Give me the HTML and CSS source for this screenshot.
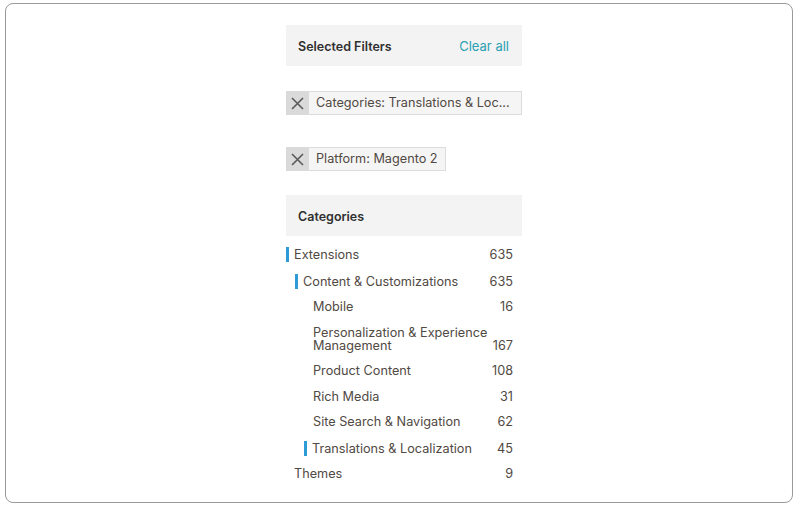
FILE: index.html
```html
<!DOCTYPE html>
<html>
<head>
<meta charset="utf-8">
<link rel="stylesheet" href="styles.css">
</head>
<body>
<div class="frame">
  <div class="panel">
    <div class="block-head">
      <span class="head-title">Selected Filters</span>
      <a class="clear">Clear all</a>
    </div>
    <div class="chips">
      <div class="chip chip-full">
        <span class="chip-x"><svg width="13" height="13" viewBox="0 0 13 13"><path d="M1 1L12 12M12 1L1 12" stroke="#5a5a5a" stroke-width="1.6" fill="none"/></svg></span>
        <span class="chip-text">Categories: Translations &amp; Loc...</span>
      </div>
      <div class="chip">
        <span class="chip-x"><svg width="13" height="13" viewBox="0 0 13 13"><path d="M1 1L12 12M12 1L1 12" stroke="#5a5a5a" stroke-width="1.6" fill="none"/></svg></span>
        <span class="chip-text">Platform: Magento 2</span>
      </div>
    </div>
    <div class="block-head cat-head">
      <span class="head-title">Categories</span>
    </div>
    <ul class="cats">
      <li class="row active lvl0"><span class="label">Extensions</span><span class="count">635</span></li>
      <li class="row active lvl1"><span class="label">Content &amp; Customizations</span><span class="count">635</span></li>
      <li class="row lvl2"><span class="label">Mobile</span><span class="count">16</span></li>
      <li class="row lvl2"><span class="label">Personalization &amp; Experience<br>Management</span><span class="count">167</span></li>
      <li class="row lvl2"><span class="label">Product Content</span><span class="count">108</span></li>
      <li class="row lvl2"><span class="label">Rich Media</span><span class="count">31</span></li>
      <li class="row lvl2"><span class="label">Site Search &amp; Navigation</span><span class="count">62</span></li>
      <li class="row active lvl2"><span class="label">Translations &amp; Localization</span><span class="count">45</span></li>
      <li class="row lvl0"><span class="label">Themes</span><span class="count">9</span></li>
    </ul>
  </div>
</div>
</body>
</html>
```
FILE: styles.css
```css
* { box-sizing: border-box; }
html, body { margin: 0; padding: 0; background: #fff; }
body {
  font-family: Inter, "Liberation Sans", sans-serif;
  font-size: 12.7px;
  color: #514943;
  padding: 3px 5px 0 5px;
}
.frame {
  width: 788px;
  height: 500px;
  border: 1px solid #9a9a9a;
  border-radius: 8px;
  padding-top: 21px;
  padding-left: 280px;
}
.panel {
  width: 236px;
}
.block-head {
  height: 41px;
  background: #f3f3f3;
  display: flex;
  align-items: center;
  justify-content: space-between;
  padding: 1px 13px 0 12px;
}
.head-title {
  font-weight: 600;
  color: #303030;
  font-size: 12.5px;
}
.clear {
  color: #2aa0b3;
  font-size: 13px;
}
.chips {
  display: flex;
  flex-direction: column;
  align-items: flex-start;
  padding-top: 25px;
  gap: 32px;
}
.chip {
  display: flex;
  height: 24px;
  border: 1px solid #dcdcdc;
  background: #f5f5f5;
  max-width: 236px;
}
.chip-full { width: 236px; }
.chip-x {
  flex: 0 0 23px;
  background: #dadada;
  display: flex;
  align-items: center;
  justify-content: center;
  margin: -1px 0 -1px -1px;
}
.chip-text {
  padding: 0 7px 0 7px;
  line-height: 22px;
  white-space: nowrap;
  color: #514943;
}
.cat-head { margin-top: 24px; }
.cats {
  list-style: none;
  margin: 0;
  padding: 5px 0 0 0;
}
.row {
  display: flex;
  align-items: flex-end;
  justify-content: space-between;
  gap: 2px;
  padding: 6px 9px 6.5px 8px;
  line-height: 13px;
}
.label { white-space: nowrap; }
.lvl1 .label { margin-left: 9px; }
.lvl2 .label { margin-left: 19px; }
.row.active { margin-top: 1px; }
.row.active .label {
  border-left: 3px solid #2e9bd6;
  padding-left: 5px;
  padding-top: 1px;
  padding-bottom: 1px;
  margin-top: -1px;
  margin-bottom: -1px;
}
.row.active.lvl0 .label { margin-left: -8px; }
.row.active.lvl1 .label { margin-left: 1px; }
.row.active.lvl2 .label { margin-left: 10px; }
.count { white-space: nowrap; }
```
